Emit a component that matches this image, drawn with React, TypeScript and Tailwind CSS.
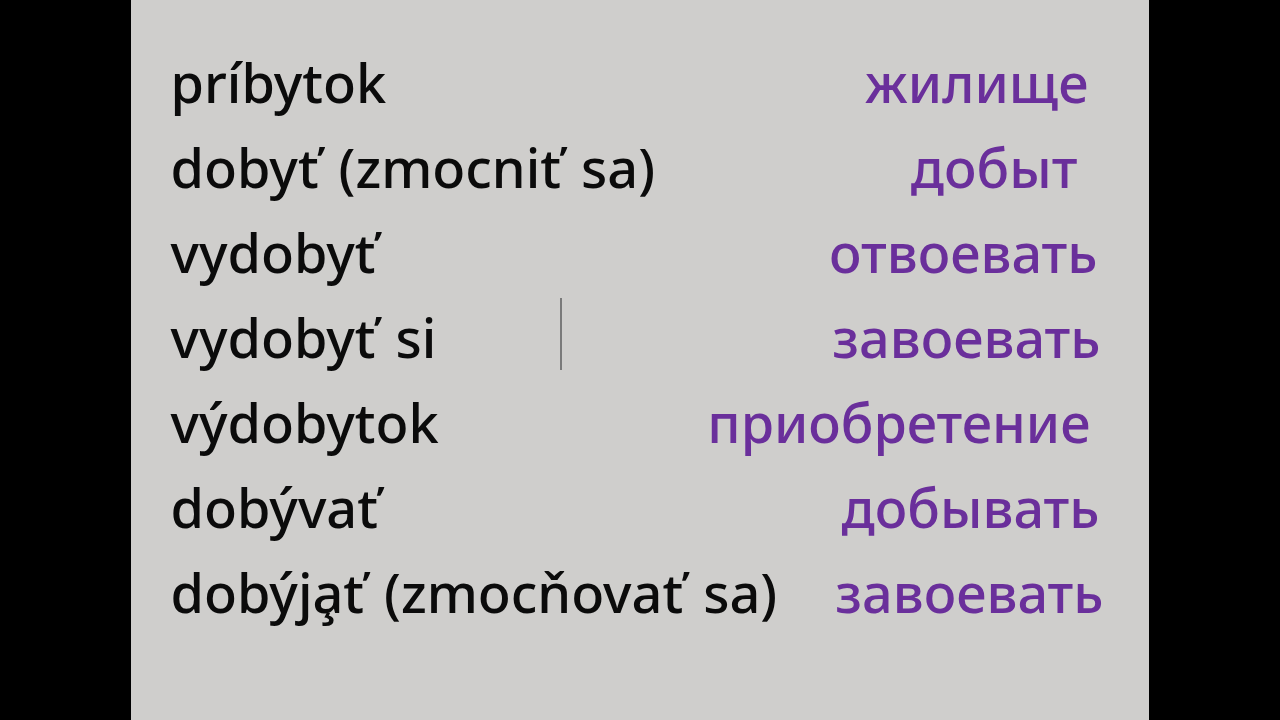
const rows = [
  { sk: 'príbytok', ru: 'жилище', mr: 'mr-[15px]' },
  { sk: 'dobyť (zmocniť sa)', ru: 'добыт', mr: 'mr-[26px]' },
  { sk: 'vydobyť', ru: 'отвоевать', mr: 'mr-[6px]' },
  { sk: 'vydobyť si', ru: 'завоевать', mr: 'mr-[3px]' },
  { sk: 'výdobytok', ru: 'приобретение', mr: 'mr-[13px]' },
  { sk: 'dobývať', ru: 'добывать', mr: 'mr-[4px]' },
  { sk: 'dobýja\u0327ť (zmocňovať sa)', ru: 'завоевать', mr: 'mr-0' },
];

const App = () => {
  return (
    <div className="w-[1280px] h-[720px] bg-black flex justify-center overflow-hidden">
      <div className="relative w-[1018px] h-full bg-[#cfcecc] ml-[-1px] pl-[40px] pr-[45px] pt-[40px] font-['Noto_Sans',sans-serif] font-medium text-[54px] leading-[85px] [word-spacing:6px]">
        {rows.map((row, i) => (
          <div key={i} className="flex justify-between">
            <span className="text-[#0b0b0b] whitespace-nowrap">{row.sk}</span>
            <span className={`text-[#6a2f9b] whitespace-nowrap ${row.mr}`}>{row.ru}</span>
          </div>
        ))}
        {/* stray divider */}
        <div className="absolute left-[429px] top-[298px] w-[2px] h-[72px] bg-[#7a7a7a]" />
      </div>
    </div>
  );
};

export default App;
